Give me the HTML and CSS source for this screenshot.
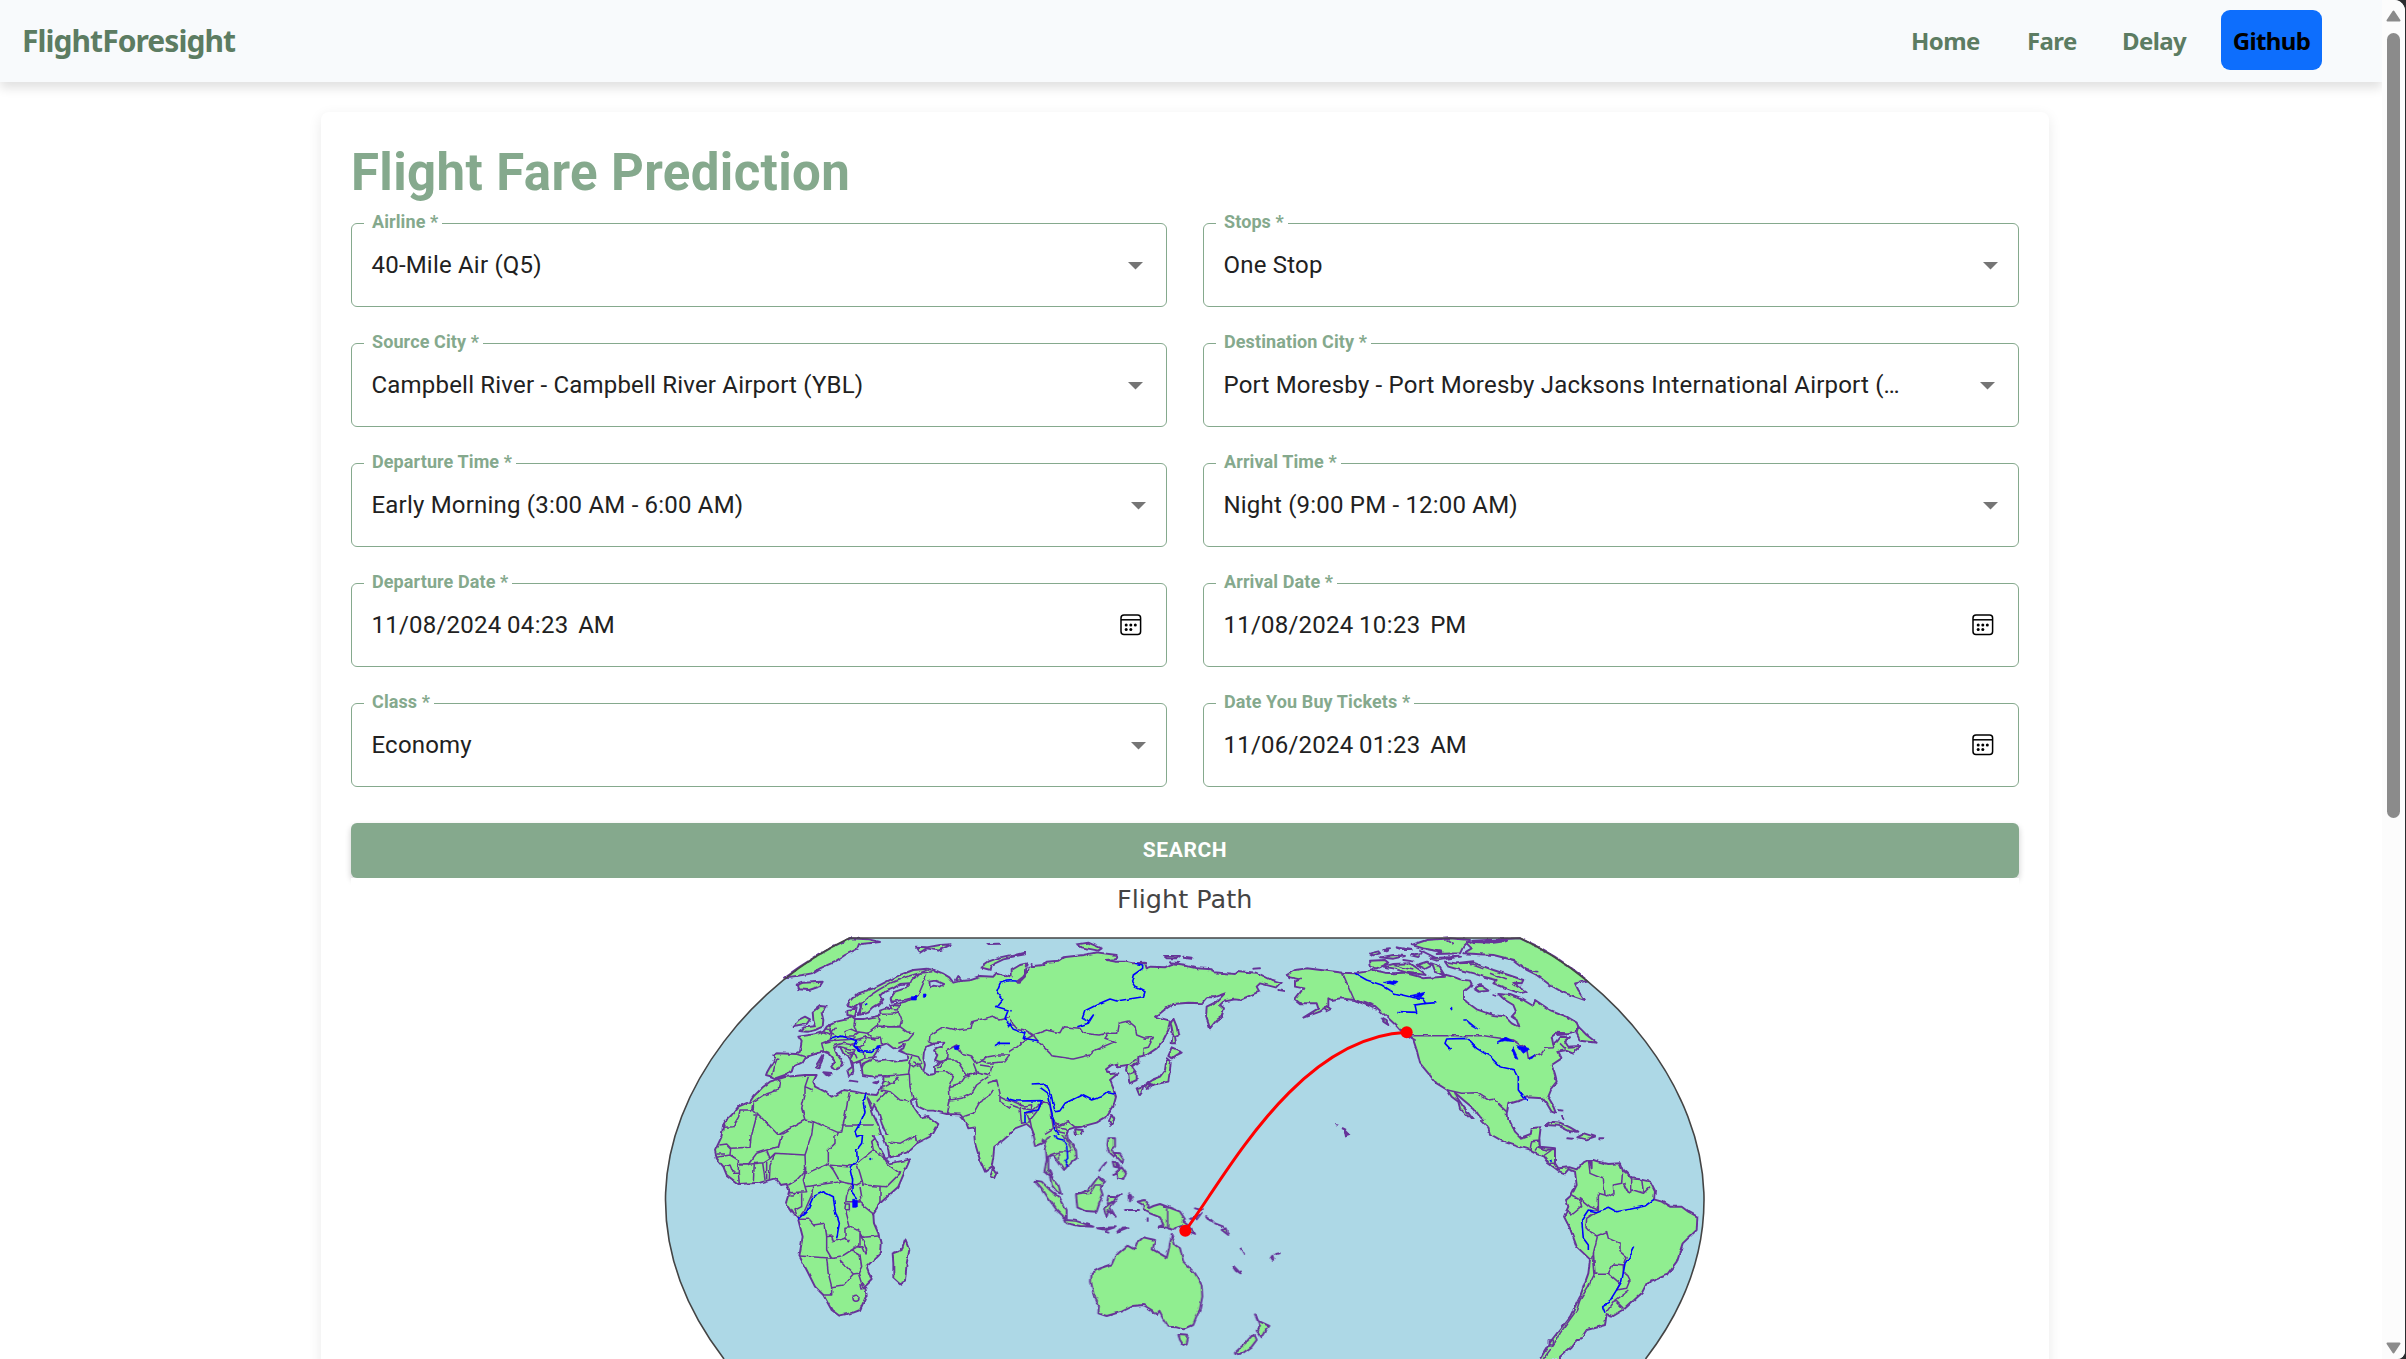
FILE: index.html
```html
<!DOCTYPE html>
<html lang="en">
<head>
<meta charset="utf-8">
<title>FlightForesight</title>
<link rel="stylesheet" href="styles.css">
</head>
<body>
<svg width="0" height="0" class="defs"><defs>
<symbol id="caret" viewBox="0 0 15 8"><path d="M0 0h15L7.5 7.5z" fill="#757575"/></symbol>
<symbol id="cal" viewBox="0 0 22 22"><rect x="1" y="1" width="19.6" height="19.6" rx="3" fill="none" stroke="#000" stroke-width="1.5"/><path d="M1 5.8h19.6" stroke="#000" stroke-width="1.5"/><g fill="#000"><circle cx="6.2" cy="11" r="1.5"/><circle cx="10.8" cy="11" r="1.5"/><circle cx="15.3" cy="11" r="1.5"/><circle cx="6.2" cy="15.5" r="1.5"/><circle cx="10.8" cy="15.5" r="1.5"/></g></symbol>
</defs></svg>
<div class="window">
<div class="page">
<header class="navbar">
<a class="brand">FlightForesight</a>
<nav class="links"><a class="home">Home</a><a class="fare">Fare</a><a class="delay">Delay</a><a class="github"><span>Github</span></a></nav>
</header>
<main class="card">
<h1>Flight Fare Prediction</h1>
<form class="grid">
<div class="field auto"><label>Airline *</label><span class="value">40-Mile Air (Q5)</span><svg class="caret"><use href="#caret"/></svg></div>
<div class="field"><label>Stops *</label><span class="value">One Stop</span><svg class="caret"><use href="#caret"/></svg></div>
<div class="field auto"><label>Source City *</label><span class="value">Campbell River - Campbell River Airport (YBL)</span><svg class="caret"><use href="#caret"/></svg></div>
<div class="field auto"><label>Destination City *</label><span class="value">Port Moresby - Port Moresby Jacksons International Airport (…</span><svg class="caret"><use href="#caret"/></svg></div>
<div class="field"><label>Departure Time *</label><span class="value">Early Morning (3:00 AM - 6:00 AM)</span><svg class="caret"><use href="#caret"/></svg></div>
<div class="field"><label>Arrival Time *</label><span class="value">Night (9:00 PM - 12:00 AM)</span><svg class="caret"><use href="#caret"/></svg></div>
<div class="field date"><label>Departure Date *</label><span class="value"><span>11/08/2024</span><span>04:23</span><span>AM</span></span><svg class="cal"><use href="#cal"/></svg></div>
<div class="field date"><label>Arrival Date *</label><span class="value"><span>11/08/2024</span><span>10:23</span><span>PM</span></span><svg class="cal"><use href="#cal"/></svg></div>
<div class="field"><label>Class *</label><span class="value">Economy</span><svg class="caret"><use href="#caret"/></svg></div>
<div class="field date"><label>Date You Buy Tickets *</label><span class="value"><span>11/06/2024</span><span>01:23</span><span>AM</span></span><svg class="cal"><use href="#cal"/></svg></div>
</form>
<button class="search" type="button">SEARCH</button>
<svg class="map" viewBox="351 878 1668 481">
<defs><filter id="coast" filterUnits="userSpaceOnUse" x="640" y="930" width="1100" height="429" color-interpolation-filters="sRGB"><feTurbulence type="fractalNoise" baseFrequency=".13" numOctaves="2" seed="4"/><feDisplacementMap in="SourceGraphic" scale="3.5" xChannelSelector="R" yChannelSelector="G"/></filter></defs>
<rect x="351" y="878" width="1668" height="481" fill="#fff"/>
<text class="map-title" x="1184.7" y="907.5" text-anchor="middle">Flight Path</text>
<path id="globe" d="M849.5 938H1520C1609.5 980 1704 1085 1704 1200C1704 1260 1681.500 1312 1645.500 1359L1630 1380H740L724 1359C688 1312 665.500 1260 665.500 1200C665.500 1085 760 980 849.500 938Z" fill="#add8e6"/>
<g filter="url(#coast)">
<!-- Europe, North Africa, Middle East -->
<svg x="660" y="920" width="350" height="215" viewBox="0 0 1050 645">
<path class="land" d="M1120 100L1080 135 1060 150 1068 170 1050 172 1010 158 1000 170 960 168 930 178 905 180 895 168 888 180 905 182 880 188 868 172 848 160 822 150 800 146 760 150 720 165 680 185 640 205 590 222 572 240 562 255 585 262 600 250 602 265 596 285 625 278 640 262 660 250 670 238 662 228 675 215 700 205 720 192 748 190 735 205 705 215 692 235 695 245 740 238 765 232 740 244 715 250 690 255 695 268 680 265 660 272 662 285 645 290 610 297 585 297 575 288 560 298 530 305 500 320 490 335 470 342 415 350 425 365 420 395 408 402 350 400 340 405 345 415 322 455 318 465 335 470 345 475 375 465 395 455 400 440 425 428 435 412 465 402 490 395 505 400 525 425 515 440 530 448 545 440 550 428 532 405 522 385 540 380 550 400 570 415 577 440 562 452 567 468 578 462 580 450 578 432 600 425 605 445 610 430 632 420 615 428 605 440 608 465 640 470 675 468 672 480 662 505 650 525 615 522 585 515 550 510 525 525 515 530 495 515 465 500 460 485 470 465 435 465 380 470 345 480 330 485 310 500 280 530 270 545 235 560 215 585 195 605 190 615 185 645 185 700H1100V100Z"/>
<path class="water" d="M945 700V622L925 625 915 600 900 583 860 582 820 572 800 572 775 560 770 535 755 540 760 562 780 592 805 588 812 595 835 612 820 640 795 652 780 700ZM635 418L650 395 660 378 680 370 700 385 718 382 735 372 730 385 715 392 740 402 742 420 705 425 680 418 650 422ZM792 395L800 380 825 370 850 368 845 380 828 385 822 395 832 405 825 420 838 425 825 440 825 462 805 465 790 455 795 435 790 415ZM810 205L808 185 825 182 850 192 838 200 820 197ZM623 535L640 585 655 615 665 650 682 650 665 610 655 575 642 555 636 570Z"/>
<path class="land" d="M372 173Q465 105 568 55L625 58 660 66 600 72 595 85 555 105 525 125 480 145 455 160 430 165ZM410 195L430 188 488 185 480 198 445 210 415 208ZM445 335L418 333 435 322 465 318 460 300 458 275 480 258 500 260 485 278 490 300 488 320 465 330ZM398 318L415 300 435 290 450 298 440 312ZM768 80L800 82 840 75 875 73 835 92 800 85 780 98ZM962 142L985 125 1020 112 1080 100 1080 108 1030 118 995 135 992 150ZM985 72l35-1zM468 442L478 425 490 405 485 425 475 445ZM490 460L515 462 505 468ZM570 482l22 3zM640 488l15-4-5 6zM562 285L562 270 590 265 585 290Z"/>
<path class="border" d="M600 285L605 250 625 230 655 210 690 190 740 170 775 160 800 150M750 192L755 180 775 160 820 155M800 165L790 190 775 225 765 232M690 255L720 258M662 283L700 282 715 275 725 300M690 268L715 270 720 250M585 297L582 315 590 335 625 340 650 320 660 300 655 290M655 318L690 320 720 318 725 300M650 322L720 320 740 335 762 340 745 360 715 370M625 340L640 355 665 355 668 375M510 320L512 340 530 350 560 350M490 335L515 345 510 360 485 370 490 390M485 370L515 362 545 360 575 358 590 350M555 335L575 328 595 338 580 348 560 348ZM500 325l15 12 12-14M585 360L620 350 610 375 590 385 575 370M520 378l30-8 30 5M620 352L650 358M592 380L610 395 612 415 650 410M540 380L585 390 570 415 580 430 610 418M555 385l10 15 20-5M565 405l20-4 6 14M352 415L340 445 335 465M348 418h10M408 402L435 410M755 408L750 435 745 465M742 402L775 410 785 430 760 440 748 430M760 425l20 10 8 18M675 468L720 465 748 462 750 500 760 540M672 480L700 490 715 470M665 510L690 515 720 540 750 545M660 508L715 478M650 545L680 515M825 455L860 455 880 470 868 500 870 540 862 582M868 500L900 490 915 468 950 460M870 540L905 535 935 520 950 495 985 470M1000 510L985 530 960 545 940 580 910 590M980 490L1010 480 1020 520M808 365L810 345 850 320 890 330 930 325 935 305 1000 288 1020 300 1060 290M808 365l20 10M838 425L860 420 862 390 890 375 905 400 935 408 950 430 985 410 1015 405 1050 405M860 420L890 420 910 450 925 470 950 455 940 430M832 445L860 415M950 455L990 465 995 440 960 435M960 420l25 10 50-5 15-20M1020 520L1020 545 1050 565 1080 580M1018 530l20 10 40 15M360 480L355 510 310 525 280 545 L280 568 355 645 435 600 425 565 435 525 435 500 445 470M435 500L458 510M280 545L275 570 240 570 235 595 220 620 188 622M290 588L275 645M280 585h18M568 520L545 637M545 615H640M435 600L460 605 535 638 525 660M460 605L455 645M545 637h-12M625 535l10 18"/>
<path class="river" d="M618 522L610 550 615 575 600 610 585 635 590 650M512 357L545 348 590 362 582 378 600 395 635 397 655 380M1080 182L1040 183 1020 190 1010 215 1028 238 1010 260 1045 270 1035 295 1055 328 1080 335M1005 380L1020 370 1050 370M1040 532L1050 542 1080 545M612 254l10-3"/>
<path class="lake" d="M754 230h15v10h-15zM790 222h8v10h-8zM882 380l16-4-4 14-10-2zM650 378l10-2-6 10z"/>
</svg>
<!-- East Asia and Siberia -->
<svg x="1010" y="920" width="275" height="215" viewBox="30 0 825 645">
<path class="land" d="M-60 90L-10 155 20 165 35 170 35 150 60 135 80 130 75 150 75 170 60 185 50 185 70 170 85 150 85 140 100 138 130 135 140 125 175 122 190 112 250 105 290 97 350 105 345 118 320 120 345 125 375 125 400 130 435 128 440 145 455 140 495 142 515 132 560 138 590 145 635 148 640 157 705 162 710 153 770 158 815 180 845 188 830 203 780 190 770 200 778 215 765 220 720 240 705 238 670 245 660 255 672 265 665 290 650 300 630 325 618 290 620 260 650 245 675 220 640 232 620 232 605 250 565 248 520 252 495 268 468 290 485 295 510 302 505 330 490 360 470 385 440 405 415 410 415 425 395 440 410 460 410 480 388 490 385 465 378 450 382 435 350 440 355 430 335 435 318 448 330 462 355 460 330 480 340 505 348 530 340 560 320 590 290 608 245 620 225 622 205 628 200 645 200 700H-60Z"/>
<path class="water" d="M5 700L10 660 45 625 80 612 95 625 108 660 110 700Z"/>
<path class="land" d="M520 295L530 320 535 345 525 350 528 370 515 370 518 340 512 310ZM515 385L545 398 530 405 515 415 505 408ZM500 415L512 425 510 450 505 485 480 490 460 495 440 490 455 480 480 470 495 450ZM410 505L430 498 425 515 418 525ZM430 495l25 2-15 10zM335 585L343 598 333 615 327 600ZM225 628L248 630 240 650 228 645ZM232 73L265 68 305 85 295 92 245 82ZM492 108L540 108 530 115 500 115ZM550 110l25 3zM510 127l25 2zM760 146l20-1zM838 210l20 4zM-30 125L75 98 75 103-20 120ZM95 132v8z"/>
<path class="border" d="M20 290L50 325 75 330 100 345 115 365 150 400 155 407 220 417 270 405 285 390 345 365 315 355 325 340 350 340 355 310 385 303 405 320 410 345 435 355 460 352 445 382 432 385 430 405 M100 345L140 330 180 338 190 320 240 325 250 340 300 345 325 340M100 345L75 360 50 382 30 395 10 420M388 462L405 455M380 440L415 415M0 535L20 550 60 565 100 570 130 545 150 555 155 590 165 605 180 615 205 605 230 625M30 540l40 18 25-4v15M60 565L65 610 90 605 80 580 100 575M130 545L110 575 90 600 95 625M155 590L160 625 135 640M165 605l10 30 20 5M170 620l25 5 10 20"/>
<path class="river" d="M405 130L428 135 428 145 400 165 395 185 405 200 435 215 430 230 350 243 330 237 300 250 255 272 247 295 265 305 280 285 265 310 232 320M0 262L30 272 15 290 40 328 75 340 70 355 115 362M0 185L15 182 50 183M95 492L130 490 150 510 158 545 165 575 180 572 195 550 245 525 275 540 305 530 325 515 345 520M120 502L145 520 153 570 160 600 165 630 185 655M20 535L50 543 125 542 115 570 75 578 75 608M10 370h18"/>
</svg>
<!-- North America -->
<svg x="1285" y="920" width="420" height="200" viewBox="75 0 1260 600">
<path class="land" d="M80 165L105 150 140 145 200 152 250 158 285 160 320 155 340 150 375 158 400 160 430 158 470 168 490 175 530 172 555 170 545 160 560 165 585 172 600 178 630 182 635 192 630 200 612 215 612 240 650 268 700 285 735 290 755 310 778 322 770 300 755 290 768 275 760 255 735 240 715 222 750 225 790 240 820 258 825 240 870 270 920 290 950 308 955 320 945 335 920 340 890 338 875 350 880 375 900 350 930 352 915 365 925 380 960 378 940 398 920 390 895 395 905 415 875 435 885 465 890 485 870 510 862 530 880 560 888 580 875 575 860 550 848 535 800 532 785 540 745 552 740 580 745 640H692L685 615 660 590 640 565 610 540 585 518 590 530 610 560 645 605 635 600 600 565 595 545 575 530 562 510 530 490 505 460 480 430 470 390 460 360 430 340 410 318 380 290 345 258 320 255 285 240 240 235 215 240 205 235 205 258 180 275 130 293 175 265 170 250 120 250 105 238 130 205 105 200 105 185 120 178 90 172Z"/>
<path class="land" d="M330 122L375 120 385 128 350 145 332 140ZM370 140L400 132 450 130 480 150 500 165 440 158 400 145ZM330 100l25-6 5 6-20 6zM370 90l20-2-10 6zM360 112L400 105 435 108 400 116ZM455 75L500 60 570 55 630 60 610 80 600 100 530 102 545 95 490 85ZM410 82l45 8-20 0zM450 105l35-6-10 12zM430 120l30 4zM470 135l30-10 15 12-20 10zM515 130l25 10 15 25-30-10zM555 125L590 130 640 128 700 150 790 180 785 190 760 188 800 215 780 220 740 205 700 190 710 180 670 170 640 160 600 150 565 140ZM480 90l50 25zM510 115L600 110 530 122ZM600 128l40-4zM640 205L660 195 685 212 655 215ZM700 222l6 2zM955 320L980 345 1010 368 960 362 950 340ZM190 265l15-3 8 6-12 6zM310 245l30 12zM365 295l15 8 5 12-15-10zM430 340l35 20zM895 570l15 2M905 585l6 12M890 345l30-2z"/>
<path class="land" d="M620 70L640 62 780 55Q885 100 983 182L945 190 955 210 975 240 910 218 870 195 830 165 800 150 760 120 700 105 610 100 635 85ZM640 66l60 2 40-5z"/>
<path class="border" d="M247 158L283 240 310 250 350 270M455 347H672L700 352 760 360 800 385 805 415 845 400 855 385 880 383 885 365M562 510L605 520 650 518 685 540 700 538 742 577M800 150l35 5M900 370l15 15M500 88l50 8M560 60l20 12M630 132l40 14M690 160l50 20M400 136l60 14"/>
<path class="river" d="M285 160L320 180 365 195 405 220 455 232 490 235 500 250 465 255 470 277 415 275M500 250l30-2M572 388L555 370 560 357 620 355 650 385 690 410 720 440 765 450 775 470 775 510 800 543M610 300h8"/>
<path class="lake" d="M370 187l20-4 25 4-10 8zM450 227l45-10-15 14zM618 298L655 328 628 312ZM708 368L735 350 762 365 735 362ZM758 380L774 415 765 412 755 390ZM770 376L810 386 790 400ZM805 418l20-15-8 12zM570 262h6v8h-6z"/>
</svg>
<path class="coastline" d="M1335 1125l3 1M1342 1128l4 2M1345 1131l4 4-3 1z"/>
<!-- Africa, Arabia, India -->
<svg x="660" y="1135" width="350" height="224" viewBox="0 15 1050 672">
<path class="land" d="M185-20L185 20 165 62 170 85 190 110 200 135 235 162 300 158 345 145 360 165 380 162 388 185 378 218 400 250 415 270 428 320 418 378 440 420 465 470 490 495 515 540 538 557 580 548 600 540 620 495 615 470 635 450 620 410 660 370 662 340 655 310 642 280 640 250 660 220 715 170 750 88 690 100 680 90 660 55 642 20 635-20ZM660-20L665 10 685 60 688 82 740 68 770 40 810 20 830-20ZM940-20L945 40 960 90 975 125 995 110 1000 80 1003 50 1030 30 1065 0 1080-20ZM1000 110L1012 130 1005 145 990 140ZM735 328L748 360 740 400 735 455 720 463 700 445 700 400 698 370 725 360Z"/>
<path class="border" d="M178 45L200 42 212 55 270 52 275 0M212 55L210 75 170 82M170 72h25M210 75L235 90 235 130M235 105h30M345 0L365 15 355 50 320 60 290 70 265 103 240 103M320 60L330 85 310 98 265 103M330 85L345 70 435 75M345 70L330 110 328 148M190 110L210 105 220 130 235 130 238 160M283 98L280 155M308 98L315 150M320 95V148M460 0L435 75 437 120 410 150 385 165M437 120L430 150 435 170 470 165 540 155 520 120M525 15L525 40 505 60 505 100 440 130M505 105L560 110 590 100M520 120l-12-15M540 155l50 10 18-10M435 170L440 185 388 188M400 188v10h-12M425 190V230L405 240 410 255M458 170L455 195 435 240 415 265M415 268L445 268 460 285 495 280 500 320 515 318 520 335 555 325 565 335 568 330M575 165L560 195 555 235 570 290 555 292 555 325M590 100L600 130 610 165 680 170 720 130 685 105M595 95L640 60 670 80 685 105M640 60l-5-25 10-10M600 170L605 200 595 215 640 252M660 170V220M560 215H595M556 222h12v20h-10M570 290L600 305 610 322 655 318M600 305L600 345 575 360M600 310L620 360 615 372 605 350 580 352M418 378L520 385 540 382 575 360 600 375 605 410 595 430 580 432 540 390M500 320L500 360 515 385M500 385L505 430 515 470 515 495 490 495M515 470L550 465 580 432M595 430L608 470M600 465l10 0 5 10-12 2zM579 505a9 9 0 1 0 18 0a9 9 0 1 0-18 0M685 35L720 40 765 15 770 40M765 15L820 0M670 85l15-5"/>
<path class="river" d="M585 0L590 20 608 12 605 40 590 60 592 90 570 115 578 150 575 185 590 205M412 268L440 245 460 200 490 185 520 200 525 240 538 280 530 325"/>
<path class="lake" d="M578 208h14v24h-14zM629 85h4v4h-4z"/>
</svg>
<!-- South-east Asia and Oceania -->
<svg x="1010" y="1135" width="290" height="224" viewBox="30 15 870 672">
<path class="land" d="M80-20L95 5 105 48 125 40 130 30 138 60 140 90 133 125 150 140 155 165 170 185 183 192 175 165 155 140 145 115 145 80 155 75 165 80 175 95 192 120 205 105 230 85 228 60 205 30 195 0 200-20ZM325 25L345 25 345 50 335 60 345 75 340 80 328 70 322 45ZM340 68L360 70 370 85 368 100 355 85ZM338 95l10 2 2 15-8-2zM350 95l8 12-2 8zM340 135L350 125 365 112 378 130 370 150 355 145 352 130ZM298 122L318 97ZM105 152L125 155 150 180 180 205 200 240 200 268 170 240 145 205 125 175ZM195 270L225 272 280 290 240 288 200 280ZM228 195L265 180 295 140 315 155 300 170 308 195 298 220 290 245 255 243 232 232ZM365 192L350 202 325 200 320 222 345 215 330 232 347 260 325 240 320 262 312 235ZM388 190l8 12-6 12zM372 240l42 0zM443 265v8zM292 295l52-3-25 8zM315 305l10 3zM352 305L365 293 385 292ZM412 215L435 210 445 225 445 235 460 228 480 222 540 245 555 268 550 275 570 290 585 312 565 305 545 285 530 290 520 300 495 292 475 290 490 285 480 262 450 250 430 240 430 225ZM570 266L590 262 605 248 590 268ZM585 235L605 240ZM618 258L628 270 640 275ZM645 280l25 10zM665 300l20 15-8-20zM722 355L732 372ZM700 408L722 430 710 422ZM815 385l5-8 3 8-4 5zM828 372l8-2zM275 428L300 415 335 403 345 380 355 370 382 347 403 358 410 340 430 322 465 330 458 358 500 383 508 350 515 315 525 345 540 355 550 395 585 430 605 465 607 500 600 535 580 585 550 598 530 592 505 590 490 565 478 542 470 555 455 540 430 525 400 528 365 545 320 558 295 550 297 525 280 490 273 455ZM535 615L565 617 560 640 550 645 540 630ZM765 553L775 570 780 575 808 588 795 605 785 622 770 602 780 590ZM765 615L770 630 755 650 720 675 705 668 735 640 755 618Z"/>
<path class="border" d="M130 40L150 15 165 10M150 75L175 66 205 65 215 60 200 30 185 10M175 66v20M228 195L270 190 285 165 308 165M503 235V298M140 120l20 25"/>
<path class="river" d="M155 0L168 25 190 30 200 50 203 85 195 95 203 110"/>
</svg>
<!-- Central and South America -->
<svg x="1480" y="1120" width="225" height="239" viewBox="0 30 675 717">
<path class="land" d="M-10 20L25 55 30 72 70 95 115 110 145 118 165 130 190 140 205 160 240 185 255 190 265 178 285 185 290 225 275 255 258 270 265 290 252 320 270 355 290 410 330 448 325 490 300 560 270 620 215 690 180 747 178 760H240V740L275 710 290 690 300 690 320 660 375 645 380 612 400 618 430 600 485 550 500 520 560 495 590 455 608 400 650 360 652 320 625 305 605 290 570 290 545 275 522 268 525 245 510 215 480 208 455 205 440 190 428 180 420 160 385 162 355 155 340 150 325 150 305 160 290 178 270 172 235 175 225 160 225 115 180 110 178 85 182 52 155 55 152 75 125 85 105 65 90 35 82-10ZM198 45L215 35 240 38 270 52 292 65 270 64 235 47ZM292 82L315 70 345 80 320 88ZM262 85l14 1zM358 85l12 0zM327 150l8 5v20z"/>
<path class="border" d="M150 120L155 92 178 90M178 88v18M165 125l10-15M175 110L200 120 225 118M190 138L215 120M210 160l18 0M325 150L330 190 370 207 375 255M428 180L425 220 400 225 402 250 385 260 375 255M430 220L445 250 460 240 490 250 510 230M455 205L455 240M485 208L490 245M375 255L355 250 355 300M272 255L300 270 305 290 275 315 258 300M300 265L330 290 355 300M350 305L320 325 318 350 335 368 350 378 380 365 385 385 420 400 420 425 438 440 430 465 400 462 385 490 345 490 340 430 352 380M335 448L342 430M338 448L342 495 325 530 300 570 290 600 240 670 225 700 190 747M385 490L420 520 410 540 440 535 450 510 440 490 430 488V465M445 540L405 570 380 605M405 570L430 595M205 690h15v15h-15z"/>
<path class="river" d="M522 268L495 288 450 298 410 305 385 292 350 305 325 300 305 330 310 385 325 405 325 420M465 410L455 430 435 460 425 515 385 580 368 590 375 608M210 150l5 5"/>
</svg>
</g>
<use href="#globe" class="frame"/>
<path class="outline" d="M724 1359C688 1312 665.500 1260 665.500 1200C665.500 1085 760 980 849.500 938H1520C1609.500 980 1704 1085 1704 1200C1704 1260 1681.500 1312 1645.500 1359"/>
<path d="M1185.300 1230.700C1225 1178 1297 1037 1406.700 1032.300" fill="none" stroke="red" stroke-width="3"/>
<circle cx="1185.300" cy="1230.700" r="6" fill="red"/><circle cx="1406.700" cy="1032.300" r="6" fill="red"/>
</svg>
</main>
</div>
<aside class="scrollbar">
<svg class="arrow" viewBox="0 0 15 12"><path d="M7.500 1.500L13.500 10.500H1.500z" fill="#8b8b8b" stroke="#8b8b8b" stroke-width="2" stroke-linejoin="round"/></svg>
<div class="thumb"></div>
<svg class="arrow down" viewBox="0 0 15 12"><path d="M7.500 10.500L13.500 1.500H1.500z" fill="#8b8b8b" stroke="#8b8b8b" stroke-width="2" stroke-linejoin="round"/></svg>
</aside>
</div>
</body>
</html>
```
FILE: styles.css
```css
* { box-sizing: border-box; }
body { margin: 0; background: #2b2c2e; font-family: Roboto, sans-serif; overflow: hidden; }
.defs { display: block; height: 0; }
.window { display: flex; width: 2405px; height: 1359px; background: #fff; border-radius: 0 11px 8px 0; overflow: hidden; }
.page { width: 2382px; height: 1359px; overflow: hidden; }

.navbar { display: flex; justify-content: space-between; align-items: center; height: 82px; padding: 0 60px 2px 22px; background: #f8fafc; box-shadow: 0 6px 10px rgba(0, 0, 0, .12); font-family: "Noto Sans", sans-serif; font-weight: 700; color: #5c7c62; }
.brand { font-size: 30px; width: 216px; white-space: nowrap; letter-spacing: -.95px; }
.links { display: flex; align-items: center; font-size: 24px; letter-spacing: -.6px; }
.links a { white-space: nowrap; }
.home { width: 116px; }
.fare { width: 95px; }
.delay { width: 99px; }
.github { display: flex; align-items: center; justify-content: center; width: 101px; height: 60px; border-radius: 9px; background: #0d6efd; color: #000; }

.card { width: 1728px; height: 1400px; margin: 30px 0 0 321px; padding: 30px; border-radius: 8px; background: #fff; box-shadow: 0 4px 14px rgba(0, 0, 0, .09); }
h1 { margin: -1px 0 19px; font-size: 51px; line-height: 63px; font-weight: 700; letter-spacing: .375px; color: #85a98d; }
.grid { display: grid; grid-template-columns: 1fr 1fr; gap: 36px; margin: 0 0 36px; }
.field { position: relative; display: flex; align-items: center; justify-content: space-between; height: 84px; padding: 0 20px 0 19.5px; border: 1px solid #85a98d; border-radius: 6px; }
.field.auto { padding-right: 23px; }
.field.date { padding-right: 24px; }
.field label { position: absolute; left: 12px; top: -15px; padding: 0 4px 0 8px; background: #fff; font-size: 18px; line-height: 26px; font-weight: 700; letter-spacing: .1px; color: #85a98d; white-space: nowrap; }
.value { font-size: 24px; line-height: 34px; letter-spacing: .2px; color: #212121; white-space: nowrap; }
.date .value { display: flex; letter-spacing: .22px; }
.date .value span + span { margin-left: 5.5px; letter-spacing: .4px; }
.date .value span:last-child { margin-left: 9.5px; letter-spacing: 0; }
.caret { width: 15px; height: 8px; position: relative; top: 1px; }
.cal { width: 22px; height: 22px; }
.search { display: block; width: 100%; height: 55px; padding: 0 0 2px; border: 0; border-radius: 6px; background: #85a98d; box-shadow: 0 3px 6px rgba(0, 0, 0, .2); color: #fff; font: 700 21px Roboto, sans-serif; letter-spacing: .6px; }

.map { display: block; position: relative; width: 1668px; height: 481px; }
.map-title { font: 25.5px "DejaVu Sans", sans-serif; fill: #444; }
.land { fill: #90ee90; stroke: #639; stroke-width: 5.8; stroke-linejoin: round; }
.water { fill: #add8e6; stroke: #639; stroke-width: 5.6; stroke-linejoin: round; }
.border { fill: none; stroke: #639; stroke-width: 4.6; stroke-linejoin: round; }
.river { fill: none; stroke: #00f; stroke-width: 4.8; stroke-linejoin: round; }
.lake { fill: #00f; stroke: #00f; stroke-width: 2; }
.coastline { fill: none; stroke: #639; stroke-width: 2.2; }
.frame { display: none; }
.outline { fill: none; stroke: #444; stroke-width: 1.6; stroke-linejoin: round; }

.scrollbar { display: flex; flex-direction: column; align-items: center; width: 23px; height: 1359px; padding: 10px 0 5px; background: #fcfcfc; }
.arrow { width: 15px; height: 12px; }
.thumb { width: 13px; height: 785px; margin-top: 11px; border-radius: 7px; background: #8b8b8b; }
.down { margin-top: auto; }
```
